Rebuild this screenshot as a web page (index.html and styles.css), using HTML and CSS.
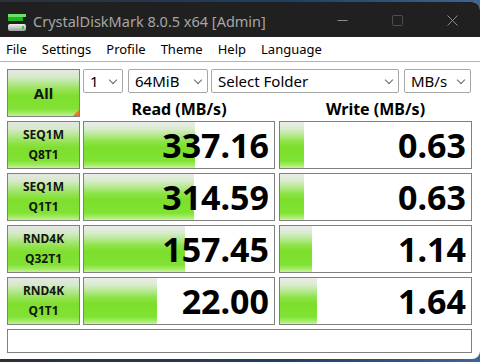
FILE: index.html
```html
<!DOCTYPE html>
<html lang="en">
<head>
    <meta charset="UTF-8">
    <meta name="viewport" content="width=device-width, initial-scale=1.0">
    <title>CrystalDiskMark 8.0.5 x64 [Admin]</title>
    <link rel="stylesheet" href="styles.css">
</head>
<body>

<div class="window">
    <!-- Barra de título -->
    <div class="titlebar">
        <svg class="app-icon" width="20" height="20" viewBox="0 0 20 20">
            <defs>
                <linearGradient id="drive" x1="0" y1="0" x2="0" y2="1">
                    <stop offset="0" stop-color="#f2f2f2"/>
                    <stop offset="1" stop-color="#9c9c9c"/>
                </linearGradient>
            </defs>
            <rect x="0" y="1" width="18" height="3" fill="#6ee06e"/>
            <rect x="0" y="4" width="15" height="4" fill="#22b422"/>
            <rect x="0" y="11" width="18" height="7" rx="2" fill="url(#drive)"/>
            <rect x="14" y="13" width="2" height="3" fill="#3cc83c"/>
        </svg>
        <span class="title">CrystalDiskMark 8.0.5 x64 [Admin]</span>
        <div class="controls">
            <span class="ctl">
                <svg width="11" height="11" viewBox="0 0 11 11"><path d="M0.5 5.5h10" stroke="#8c8c8c" stroke-width="1"/></svg>
            </span>
            <span class="ctl">
                <svg width="11" height="11" viewBox="0 0 11 11"><rect x="0.5" y="0.5" width="10" height="10" rx="1" fill="none" stroke="#4e4e4e" stroke-width="1"/></svg>
            </span>
            <span class="ctl">
                <svg width="11" height="11" viewBox="0 0 11 11"><path d="M0.5 0.5l10 10M10.5 0.5l-10 10" stroke="#8c8c8c" stroke-width="1"/></svg>
            </span>
        </div>
    </div>

    <!-- Menú -->
    <div class="menubar">
        <span>File</span>
        <span>Settings</span>
        <span>Profile</span>
        <span>Theme</span>
        <span>Help</span>
        <span>Language</span>
    </div>

    <div class="main">
        <div class="grid">
            <div class="btn all">All</div>
            <div class="top">
                <div class="combos">
                    <div class="combo c-count">1<i></i></div>
                    <div class="combo c-size">64MiB<i></i></div>
                    <div class="combo c-folder">Select Folder<i></i></div>
                    <div class="combo c-unit">MB/s<i></i></div>
                </div>
                <div class="heads">
                    <div>Read (MB/s)</div>
                    <div>Write (MB/s)</div>
                </div>
            </div>

            <div class="btn test">SEQ1M<br>Q8T1</div>
            <div class="meter read" style="background-size: 111px 100%">337.16</div>
            <div class="meter write" style="background-size: 24px 100%">0.63</div>

            <div class="btn test">SEQ1M<br>Q1T1</div>
            <div class="meter read" style="background-size: 110px 100%">314.59</div>
            <div class="meter write" style="background-size: 24px 100%">0.63</div>

            <div class="btn test">RND4K<br>Q32T1</div>
            <div class="meter read" style="background-size: 101px 100%">157.45</div>
            <div class="meter write" style="background-size: 32px 100%">1.14</div>

            <div class="btn test">RND4K<br>Q1T1</div>
            <div class="meter read" style="background-size: 73px 100%">22.00</div>
            <div class="meter write" style="background-size: 37px 100%">1.64</div>
        </div>
        <div class="status"></div>
    </div>
</div>

</body>
</html>
```

FILE: styles.css
```css
html, body {
    margin: 0;
    height: 100%;
}

body {
    font-family: "Noto Sans", "Open Sans", sans-serif;
    background: linear-gradient(to right, #2c2f36, #1e3f66 60%, #3b6690);
    overflow: hidden;
}

.window {
    width: 480px;
    height: 357px;
    margin-top: 2px;
    background-color: #ffffff;
    border-radius: 0 8px 8px 0;
    overflow: hidden;
}

/* Barra de título */
.titlebar {
    height: 35px;
    background-color: #202020;
    display: flex;
    align-items: center;
}

.app-icon {
    margin-left: 8px;
    margin-top: 6px;
    flex: none;
}

.title {
    margin-left: 5px;
    padding-top: 2px;
    font-size: 14.5px;
    color: #a6a6a6;
    white-space: nowrap;
}

.controls {
    margin-left: auto;
    display: flex;
    height: 100%;
}

.ctl {
    width: 55px;
    display: flex;
    align-items: center;
    justify-content: center;
    padding-top: 2px;
}

/* Menú */
.menubar {
    height: 24px;
    line-height: 24px;
    padding-left: 6px;
    display: flex;
    gap: 15px;
    font-size: 13px;
    color: #000;
    border-bottom: 1px solid #b4b4b4;
}

.main {
    padding: 7px 0 0 7px;
}

.grid {
    display: grid;
    grid-template-columns: 73px 195px 197px;
    grid-template-rows: repeat(5, 48px);
    row-gap: 4px;
}

/* Degradado verde de botones y medidores */
.btn {
    box-sizing: border-box;
    border: 1px solid #808080;
    background: linear-gradient(to bottom, #e6e6e6 0%, #d4eac6 16%, #ade682 32%, #8fe24a 46%, #7fdf2e 56%, #82e234 84%, #a4ea68 94%, #c4f29a 100%);
    color: #141414;
    font-weight: bold;
    display: flex;
    align-items: center;
    justify-content: center;
    text-align: center;
}

.all {
    position: relative;
    font-size: 15px;
}

.all::after {
    content: "";
    position: absolute;
    right: 0;
    bottom: 0;
    border-style: solid;
    border-width: 0 0 6px 6px;
    border-color: transparent transparent #f0741c transparent;
}

.test {
    font-size: 12px;
    line-height: 20px;
}

.top {
    grid-column: 2 / 4;
    margin-left: 3px;
}

.combos {
    display: flex;
    height: 24px;
}

.combo {
    box-sizing: border-box;
    position: relative;
    height: 24px;
    line-height: 22px;
    padding-left: 6px;
    border: 1px solid #a6a6a6;
    border-radius: 2px;
    font-size: 15px;
    color: #000;
    white-space: nowrap;
}

.combo i {
    position: absolute;
    right: 6px;
    top: 7px;
    width: 5px;
    height: 5px;
    border-right: 1px solid #666;
    border-bottom: 1px solid #666;
    transform: rotate(45deg);
}

.c-count { width: 40px; }
.c-size { width: 80px; margin-left: 5px; }
.c-folder { width: 188px; margin-left: 3px; }
.c-unit { width: 67px; margin-left: 5px; }

.heads {
    display: grid;
    grid-template-columns: 192px 193px;
    column-gap: 4px;
    margin-top: 7px;
    height: 17px;
    line-height: 19px;
    font-size: 16px;
    font-weight: bold;
    text-align: center;
    color: #000;
}

.meter {
    box-sizing: border-box;
    border: 1px solid #808080;
    background-color: #ffffff;
    background-image: linear-gradient(to bottom, #ececec 0%, #d8eccc 15%, #b2e88a 30%, #8ee448 42%, #7ddf2c 55%, #80e232 84%, #a6ec6c 94%, #c8f4a0 100%);
    background-repeat: no-repeat;
    background-position: left top;
    text-align: right;
    padding-right: 5px;
    font-size: 34px;
    font-weight: bold;
    line-height: 46px;
    color: #000;
}

.read { margin-left: 3px; }
.write { margin-left: 4px; }

.status {
    box-sizing: border-box;
    width: 465px;
    height: 24px;
    margin-top: 4px;
    border: 1px solid #808080;
}
```
